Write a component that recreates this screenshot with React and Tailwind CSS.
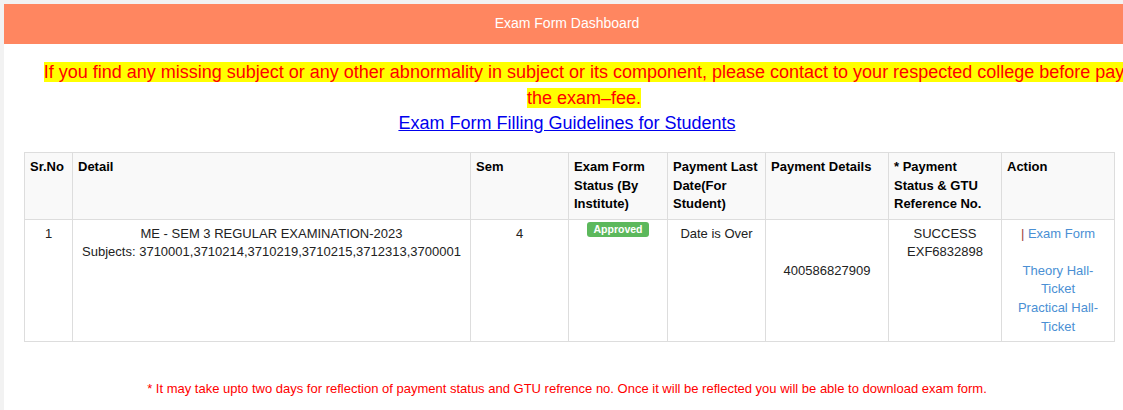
import React from 'react';

const cols = [
    { label: 'Sr.No', w: 'w-[48px]' },
    { label: 'Detail', w: 'w-[398px]' },
    { label: 'Sem', w: 'w-[98px]' },
    { label: 'Exam Form Status (By Institute)', w: 'w-[99px]' },
    { label: 'Payment Last Date(For Student)', w: 'w-[98px]' },
    { label: 'Payment Details', w: 'w-[123px]' },
    { label: '* Payment Status & GTU Reference No.', w: 'w-[113px]' },
    { label: 'Action', w: 'w-[113px]' },
];

const td = 'border border-[#dddddd] px-[5px] py-[5px] align-top text-center';

const App = () => {
    return (
        <div className="min-h-screen w-full overflow-hidden bg-[#f2f2f2] pt-1 pl-1 font-['Liberation_Sans',Arial,sans-serif] text-[13px] leading-[1.42857] text-[#222]">
            <div className="w-[1126px] min-h-[406px] bg-white">
                {/* top bar */}
                <div className="h-10 bg-[#ff8660] flex items-center justify-center text-white text-[14px]">
                    Exam Form Dashboard
                </div>

                {/* notice */}
                <div className="pt-4 ml-[10px] w-[1140px] text-center text-[18px] leading-[1.42857]">
                    <span className="inline-block w-[24px]" />
                    <span className="bg-[#ffff00] text-[#ff0000]">
                        If you find any missing subject or any other abnormality in subject or its component, please contact to your respected college before paying the exam–fee.
                    </span>
                </div>
                <div className="text-center text-[18px] leading-[1.42857]">
                    <a href="#" className="text-[#0000ee] underline">Exam Form Filling Guidelines for Students</a>
                </div>

                <div className="ml-5 pt-[15px]">
                    <table className="w-[1090px] table-fixed border-collapse border border-[#dddddd]">
                        <thead>
                            <tr className="bg-[#f9f9f9]">
                                {cols.map(c => (
                                    <th key={c.label} className={`${c.w} border border-[#dddddd] px-[5px] py-[5px] align-top text-left font-bold text-black`}>
                                        {c.label}
                                    </th>
                                ))}
                            </tr>
                        </thead>
                        <tbody>
                            <tr>
                                <td className={td}>1</td>
                                <td className={td}>
                                    ME - SEM 3 REGULAR EXAMINATION-2023<br />
                                    Subjects: 3710001,3710214,3710219,3710215,3712313,3700001
                                </td>
                                <td className={td}>4</td>
                                <td className={td}>
                                    <div className="-mt-[3px] flex justify-center">
                                        <span className="rounded-[3px] bg-[#5cb85c] px-[6px] pt-[2px] pb-[3px] text-[10.5px] font-bold leading-none text-white">Approved</span>
                                    </div>
                                </td>
                                <td className={td}>Date is Over</td>
                                <td className={td}>
                                    <br /><br />400586827909
                                </td>
                                <td className={td}>
                                    SUCCESS<br />EXF6832898
                                </td>
                                <td className={td}>
                                    <span className="text-[#a0453a]">|</span>{' '}
                                    <a href="#" className="text-[#4a8fd4]">Exam Form</a>
                                    <br /><br />
                                    <a href="#" className="text-[#4a8fd4]">Theory Hall-Ticket</a>
                                    <br />
                                    <a href="#" className="text-[#4a8fd4]">Practical Hall-Ticket</a>
                                </td>
                            </tr>
                        </tbody>
                    </table>
                </div>

                <div className="pt-[38px] text-center text-[13px] text-[#ff0000]">
                    * It may take upto two days for reflection of payment status and GTU refrence no. Once it will be reflected you will be able to download exam form.
                </div>
            </div>
        </div>
    );
};

export default App;
